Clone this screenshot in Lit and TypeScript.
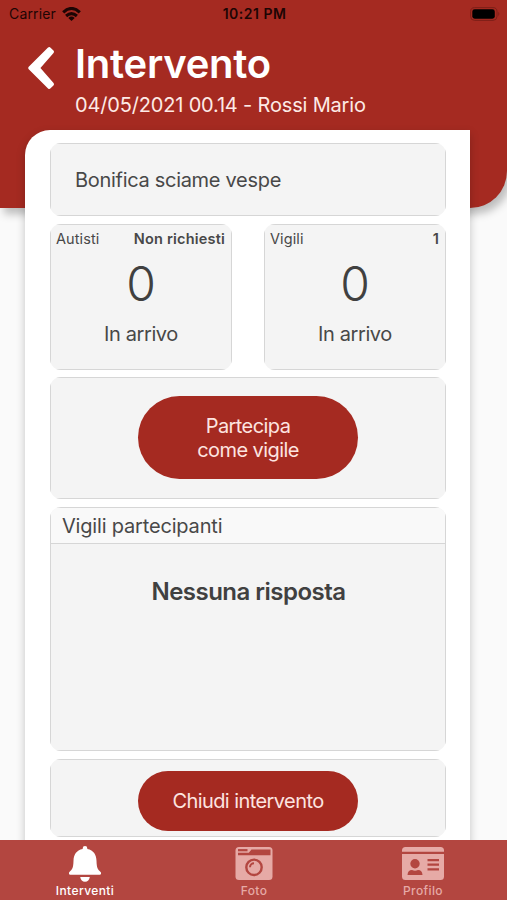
import { LitElement, html, css, svg } from "lit";
import { customElement } from "lit/decorators.js";

@customElement("app-root")
export class AppRoot extends LitElement {
  static styles = css`
    :host {
      display: block;
      position: relative;
      width: 507px;
      height: 900px;
      overflow: hidden;
      background: #fafafa;
      color: #484848;
      font-family: Inter, "Liberation Sans", sans-serif;
      white-space: nowrap;
    }
    * { box-sizing: border-box; }
    .header {
      height: 208px;
      background: #a52a21;
      border-bottom-right-radius: 37px;
      box-shadow: 4px 6px 9px rgba(0, 0, 0, 0.25);
      color: #fff;
    }
    .status {
      display: grid;
      grid-template-columns: 1fr auto 1fr;
      align-items: center;
      height: 27px;
      padding: 0 7px 0 9px;
      color: #1d0504;
      font-size: 14px;
    }
    .carrier { display: flex; align-items: center; gap: 6px; letter-spacing: 0.15px; }
    .time { font-weight: 600; letter-spacing: 0.5px; }
    .battery { justify-self: end; }
    .status svg, .back svg, .tab svg { display: block; }
    .heading { display: flex; padding: 17px 0 0 27px; }
    .back { width: 48px; padding-top: 2px; }
    h1 { margin: 0; font-size: 40px; line-height: 40px; font-weight: 600; letter-spacing: -0.25px; }
    .sub { margin-top: 9px; font-size: 20px; line-height: 24px; color: #fdeae6; letter-spacing: -0.17px; }
    .sheet {
      display: flex;
      flex-direction: column;
      gap: 8px;
      width: 445.4px;
      height: 720px;
      margin: -78px 0 0 25px;
      padding: 13px 24.4px 0 25px;
      position: relative;
      background: #fff;
      border-top-left-radius: 25px;
      box-shadow: 0 4px 10px rgba(0, 0, 0, 0.22);
    }
    .card {
      flex: none;
      position: relative;
      border-radius: 11px;
      background: #f4f4f4;
      overflow: hidden;
    }
    /* Square frame clipped by the rounded card, so the line fades out at the corners. */
    .card::after {
      content: "";
      position: absolute;
      inset: 0;
      border: 1px solid #d6d6d6;
      pointer-events: none;
    }
    .title { height: 73px; padding: 0 25px; display: flex; align-items: center; font-size: 20px; letter-spacing: -0.3px; }
    .counts { display: flex; justify-content: space-between; }
    .count { width: 182px; height: 146px; text-align: center; }
    .count-head { display: flex; justify-content: space-between; padding: 5px 7px 0 6px; font-size: 14.5px; line-height: 20px; letter-spacing: 0.1px; }
    .count-head b { font-weight: 600; letter-spacing: 0.2px; }
    .number { margin-top: 7px; font-size: 48px; line-height: 56px; color: #404040; font-weight: 300; }
    .label { margin-top: 9px; font-size: 20px; line-height: 26px; letter-spacing: -0.4px; }
    .join { height: 122px; margin-top: -1px; padding-top: 19px; }
    .button {
      display: flex;
      align-items: center;
      justify-content: center;
      width: 220px;
      margin: 0 auto;
      border: 0;
      padding: 0;
      background: #a52a21;
      color: #fde4e0;
      font: 20px/24px Inter, "Liberation Sans", sans-serif;
      letter-spacing: -0.58px;
      text-align: center;
    }
    .tall { height: 83px; border-radius: 42px; }
    .short { height: 60px; border-radius: 30px; }
    .people { height: 244px; }
    .people-head { height: 37px; padding: 0 12px; background: #f9f9f9; border-bottom: 1px solid #d6d6d6; font-size: 20px; line-height: 38px; letter-spacing: -0.18px; }
    .empty { margin-top: 33px; padding-left: 1px; text-align: center; font-size: 24px; line-height: 30px; font-weight: 600; letter-spacing: -0.52px; color: #404040; }
    .close { height: 78px; padding-top: 12px; }
    .tabs {
      position: absolute;
      left: 0;
      right: 0;
      bottom: 0;
      height: 60px;
      display: grid;
      grid-template-columns: repeat(3, 1fr);
      background: #b34640;
    }
    .tab { display: flex; flex-direction: column; align-items: center; color: #e6aaa6; font-size: 12px; font-weight: 500; letter-spacing: 0.4px; line-height: 16px; }
    .tab span { padding-left: 1px; }
    .tab svg { height: 43px; }
    .tab.active { color: #fff; }
  `;

  render() {
    return html`
      <header class="header">
        <div class="status">
          <span class="carrier">Carrier
            <svg width="19" height="14" viewBox="0 0 19 14" fill="none" stroke="currentColor" stroke-width="3.1">
              <path d="M1.2 5.3Q9.5-2.3 17.8 5.3M4.100 9Q9.5 4.300 14.900 9"/>
              <path d="M6.300 10.900Q9.500 8.300 12.700 10.900L9.500 14Z" fill="currentColor" stroke="none"/>
            </svg>
          </span>
          <span class="time">10:21 PM</span>
          <svg class="battery" width="30" height="14" viewBox="0 0 30 14">
            <rect x=".6" y=".6" width="26.4" height="12.8" rx="4" fill="none" stroke="#7d1f18"/>
            <rect x="2.3" y="2.3" width="22.5" height="9.4" rx="2.4" fill="#000"/>
            <path d="M28.3 4.8q2 2.2 0 4.4z" fill="#7d1f18"/>
          </svg>
        </div>
        <div class="heading">
          <div class="back">
            <svg width="30" height="44" viewBox="0 0 30 44"><path d="M22.3 2.9 25.2 5.800 11 22 25.2 38.200 22.300 41.100 3 22Z" fill="#fff" stroke="#fff" stroke-width="3.600" stroke-linejoin="round"/></svg>
          </div>
          <div>
            <h1>Intervento</h1>
            <div class="sub">04/05/2021 00.14 - Rossi Mario</div>
          </div>
        </div>
      </header>
      <main class="sheet">
        <section class="card title">Bonifica sciame vespe</section>
        <div class="counts">
          ${this.count("Autisti", "Non richiesti")} ${this.count("Vigili", "1")}
        </div>
        <section class="card join">
          <button class="button tall"><span>Partecipa<br />come vigile</span></button>
        </section>
        <section class="card people">
          <div class="people-head">Vigili partecipanti</div>
          <div class="empty">Nessuna risposta</div>
        </section>
        <section class="card close"><button class="button short">Chiudi intervento</button></section>
      </main>
      <nav class="tabs">
        ${this.tab("Interventi", true, svg`
          <path d="M17.7 8.2v-.7a2.3 2.3 0 0 1 4.6 0v.7C28.7 9.3 31.3 14 31.5 20c.2 7.5 1.3 8.900 4.100 11.200.9.900.5 2.800-.8 2.800H5.200c-1.300 0-1.700-1.900-.8-2.800C7.200 28.900 8.300 27.500 8.500 20 8.700 14 11.300 9.300 17.700 8.200Z" fill="currentColor" transform="translate(0 .8)"/>
          <path d="M15.200 37h9.600q-.8 4.800-4.800 4.800T15.200 37Z" fill="currentColor"/>`)}
        ${this.tab("Foto", false, svg`
          <rect x="1.500" y="7" width="37" height="33" rx="3.500" fill="currentColor"/>
          <g stroke="#b34640" fill="none">
            <path d="M4 10.200h9.500" stroke-width="2.200"/>
            <path d="M4 15.300H36.500V9.400H17.500L14.800 12.800H4Z" fill="#b34640" stroke="none"/>
            <circle cx="20" cy="27.300" r="7.700" stroke-width="2.400"/>
            <path d="M16 27.300a4 4 0 0 1 4-4" stroke-width="2"/>
          </g>`)}
        ${this.tab("Profilo", false, svg`
          <path d="M-1 11.800V10.500q0-3.500 3.500-3.500h35q3.500 0 3.500 3.500v1.300ZM-1 14H41v22.500q0 3.500-3.500 3.500h-35Q-1 40-1 36.500Z" fill="currentColor"/>
          <g fill="#b34640"><circle cx="12" cy="23.700" r="4.700"/><path d="M4.500 35q.3-4.900 4.500-4.900 3 1.300 6 0 4.200 0 4.500 4.900Z"/><path d="M24.500 19H36v2.200H24.500ZM24.500 23.600H36v2.200H24.500ZM24.500 28.200H36v2.200H24.500Z"/></g>`)}
      </nav>
    `;
  }

  private count(name: string, need: string) {
    return html`<section class="card count">
      <div class="count-head"><span>${name}</span><b>${need}</b></div>
      <div class="number">0</div>
      <div class="label">In arrivo</div>
    </section>`;
  }

  private tab(label: string, active: boolean, icon: unknown) {
    return html`<div class="tab ${active ? "active" : ""}">
      <svg width="42" height="43" viewBox="-1 0 42 43">${icon}</svg>
      <span>${label}</span>
    </div>`;
  }
}
